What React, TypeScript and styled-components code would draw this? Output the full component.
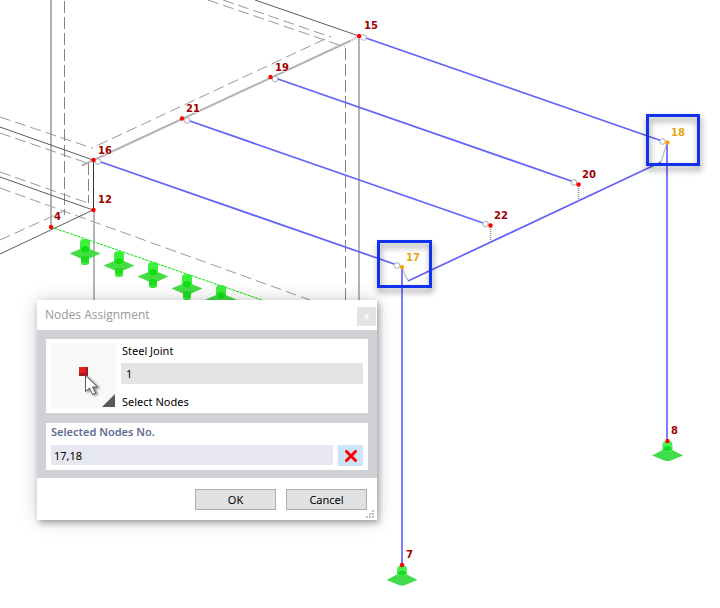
import React, { useState } from 'react';
import styled, { createGlobalStyle } from 'styled-components';

const GlobalStyle = createGlobalStyle`
  * { box-sizing: border-box; }
  body {
    margin: 0;
    background: #fff;
    font-family: 'Noto Sans', 'Open Sans', sans-serif;
    font-size: 11px;
    line-height: 16px;
    color: #000;
  }
`;

type Point = [number, number];
type Segment = [number, number, number, number];

const solidEdges: Segment[] = [
  [255, 0, 359, 36],
  [0, 127, 93, 160],
  [0, 177, 93, 210],
  [0, 254, 93, 210],
];

const hiddenEdges: Segment[] = [
  [0, 117, 92, 148],
  [325, 39, 92, 148],
  [0, 133, 90, 164],
  [208, 0, 345, 47],
  [223, 0, 331, 37],
  [0, 172, 88, 203],
  [0, 188, 310, 300],
  [0, 240, 64, 211],
];

const hiddenPosts: Segment[] = [
  [64.5, 1, 64.5, 215],
  [345.5, 48, 345.5, 312],
  [88.5, 163, 88.5, 203],
];

const beams: Segment[] = [
  [363, 37, 662, 141],
  [275, 78, 574, 182],
  [187, 120, 486, 224],
  [98, 161, 397, 265],
  [408, 281, 661, 162],
];

const columns: Segment[] = [
  [402, 267, 402, 566],
  [667, 143, 667, 441],
];

const offsets: Segment[] = [
  [350, 41, 359, 36],
  [402, 268, 408, 281],
  [667, 143, 661, 162],
  [490.5, 227, 490.5, 242],
  [578.5, 186, 578.5, 201],
];

const hinges: Point[] = [
  [363.5, 37.5], [275, 79], [187, 120.5], [98, 161.5],
  [485.5, 224], [574, 182.5], [397, 265.5], [662.5, 141.5],
];

interface ModelNode { no: number; x: number; y: number; label: Point; selected?: boolean }

const nodes: ModelNode[] = [
  { no: 15, x: 359, y: 36, label: [364, 29] },
  { no: 19, x: 270.5, y: 77, label: [275, 71] },
  { no: 21, x: 182, y: 118.5, label: [186, 112] },
  { no: 16, x: 93.5, y: 160, label: [98, 154] },
  { no: 12, x: 93.5, y: 210, label: [98, 203] },
  { no: 4, x: 51, y: 227, label: [54, 220] },
  { no: 22, x: 490.5, y: 225.5, label: [494, 219] },
  { no: 20, x: 578.5, y: 184.5, label: [582, 178] },
  { no: 7, x: 402, y: 565, label: [406, 558] },
  { no: 8, x: 667.5, y: 441, label: [671, 434] },
  { no: 17, x: 402, y: 267, label: [406, 261], selected: true },
  { no: 18, x: 667.5, y: 142.5, label: [671, 136], selected: true },
];

const lineSupports: Point[] = [[85, 253], [119, 265], [153, 276], [187, 288], [221, 299]];

const Workspace = styled.main`
  position: relative;
  min-height: 100vh;
  overflow: hidden;
`;

const Drawing = styled.svg`
  display: block;
`;

const NodeLabel = styled.text<{ $selected?: boolean }>`
  font: bold 10px 'DejaVu Sans', sans-serif;
  fill: ${p => (p.$selected ? '#e6a514' : '#a00000')};
  stroke: #fff;
  stroke-width: 1px;
  paint-order: stroke;
`;

const Highlight = styled.rect`
  fill: none;
  stroke: #1032ee;
  stroke-width: 3px;
  filter: drop-shadow(1px 4px 3px rgba(0, 0, 0, 0.45));
`;

const Dialog = styled.section`
  position: absolute;
  left: 37px;
  top: 300px;
  width: 340px;
  background: #fff;
  box-shadow: 2px 3px 6px rgba(0, 0, 0, 0.3), 0 0 18px rgba(0, 0, 0, 0.18);
`;

const TitleBar = styled.header`
  display: flex;
  align-items: center;
  justify-content: space-between;
  height: 30px;
  padding: 0 1px 0 8px;
`;

const Title = styled.h1`
  margin: 0;
  font-family: 'Open Sans', sans-serif;
  font-size: 12px;
  font-weight: 400;
  color: #999;
`;

const CloseButton = styled.button`
  display: grid;
  place-items: center;
  width: 19px;
  height: 19px;
  margin-top: 3px;
  padding: 0;
  border: 0;
  background: #e4e4e4;
`;

const Body = styled.div`
  display: grid;
  gap: 10px;
  padding: 9px 9px 8px;
  background: #d1d0d6;
`;

const JointPanel = styled.div`
  display: flex;
  gap: 5px;
  padding: 4px 5px 5px;
  background: #fff;
`;

const PickButton = styled.button`
  width: 65px;
  height: 65px;
  padding: 0;
  border: 0;
  background: #f8f8f8;
`;

const JointFields = styled.div`
  flex: 1;
  display: flex;
  flex-direction: column;
`;

const FieldLabel = styled.label`
  height: 20px;
  padding-left: 1px;
`;

const PickLabel = styled.span`
  height: 24px;
  padding: 10px 0 0 1px;
`;

const JointInput = styled.input`
  width: 100%;
  height: 21px;
  padding: 0 5px;
  border: 0;
  background: #e4e4e4;
  color: #000;
  font: inherit;
`;

const SelectionPanel = styled.div`
  padding: 1px 5px 4px;
  background: #fff;
`;

const SelectionLabel = styled.label`
  display: block;
  height: 21px;
  font-weight: 600;
  color: #5f6c96;
`;

const SelectionRow = styled.div`
  display: flex;
  gap: 5px;
`;

const SelectionInput = styled.input`
  flex: 1;
  min-width: 0;
  height: 20px;
  padding: 0 3px;
  border: 0;
  background: #e7e7f1;
  color: #000;
  font: inherit;
`;

const ClearButton = styled.button`
  display: grid;
  place-items: center;
  width: 25px;
  height: 21px;
  padding: 0;
  border: 0;
  background: #cce4f7;
`;

const Footer = styled.footer`
  display: flex;
  justify-content: flex-end;
  gap: 10px;
  padding: 11px 10px 10px;
`;

const ActionButton = styled.button`
  width: 81px;
  height: 21px;
  padding: 0;
  border: 1px solid #adadad;
  background: #e1e1e1;
  color: #000;
  font: inherit;
`;

const ResizeGrip = styled.svg`
  position: absolute;
  right: 3px;
  bottom: 2px;
`;

function Lines({ items }: { items: Segment[] }) {
  return (
    <>
      {items.map(([x1, y1, x2, y2]) => (
        <line key={`${x1},${y1},${x2},${y2}`} x1={x1} y1={y1} x2={x2} y2={y2} />
      ))}
    </>
  );
}

function LineSupport({ at: [x, y] }: { at: Point }) {
  return (
    <g transform={`translate(${x} ${y})`}>
      <path d="M-4 1v9q0 2 4 2t4-2V1z" fill="#3ceb3c" />
      <path d="M-15.500 0.500L0-6L15.500 0.500L2 6.500H-2z" fill="#46dc46" />
      <path d="M-5-11q0-3 5-3t5 3v9q-5 4-10 0z" fill="#3cf03c" />
      <path d="M-4-5q4-4 8 0v3q-4 3-8 0z" fill="#14dc14" />
      <path d="M-4 4q4-2 8 0v4q-4 3-8 0z" fill="#1edc1e" />
    </g>
  );
}

function NodeSupport({ at: [x, y] }: { at: Point }) {
  return (
    <g transform={`translate(${x} ${y})`}>
      <path d="M-15.500 15L-4 9H4L15.500 15L2 20.500H-2z" fill="#41dc4b" />
      <path d="M-5 5Q-5 0 0 0t5 5v5q-5 3-10 0z" fill="#46f050" />
      <path d="M-4 7q4-3 8 0v2q-4 3-8 0z" fill="#14dc1e" />
    </g>
  );
}

function StructureModel() {
  return (
    <Drawing width="720" height="608" viewBox="0 0 720 608" role="img" aria-label="Structural model with numbered nodes">
      <g stroke="#999" fill="none" strokeDasharray="11 5">
        <Lines items={hiddenEdges} />
      </g>
      <g stroke="#858585" fill="none" strokeDasharray="12 4">
        <Lines items={hiddenPosts} />
      </g>
      <path d="M51 0V227" stroke="#999" strokeWidth="1.5" />
      <path d="M94 210V301M359 36V301" stroke="#b4b4b4" strokeWidth="2" />
      <path d="M82 165.500L350 41" stroke="#b4b4b4" strokeWidth="2" />
      <g stroke="#5c5c5c">
        <Lines items={solidEdges} />
      </g>
      <path d="M93.500 160V210" stroke="#333" />
      <path d="M51 227L262 300" stroke="#00e600" strokeDasharray="3 1" />
      {lineSupports.map(p => <LineSupport key={p[0]} at={p} />)}
      <g stroke="#6464fa" strokeWidth="1.750">
        <Lines items={beams} />
      </g>
      <g stroke="#7d7dff" strokeWidth="2">
        <Lines items={columns} />
      </g>
      <g stroke="#8c8c8c" strokeWidth="1.5" strokeDasharray="1 1">
        <Lines items={offsets} />
      </g>
      <NodeSupport at={[402, 565]} />
      <NodeSupport at={[667.5, 440.5]} />
      {hinges.map(([x, y]) => (
        <circle key={`${x},${y}`} cx={x} cy={y} r="2.800" fill="#fff" stroke="#aaa" />
      ))}
      {nodes.map(n => (
        <g key={n.no}>
          <circle cx={n.x} cy={n.y} r="2.200" fill={n.selected ? '#f5a010' : '#ff0000'} />
          <NodeLabel x={n.label[0]} y={n.label[1]} $selected={n.selected}>{n.no}</NodeLabel>
        </g>
      ))}
      <Highlight x="378.500" y="241.500" width="52" height="45" />
      <Highlight x="647.500" y="115.500" width="51" height="49" />
    </Drawing>
  );
}

function PickIcon() {
  return (
    <svg width="65" height="65" viewBox="0 0 65 65" aria-hidden="true">
      <defs>
        <filter id="cursorShadow" x="-50%" y="-50%" width="200%" height="200%">
          <feDropShadow dx="2" dy="1" stdDeviation="1" floodColor="#000" floodOpacity="0.5" />
        </filter>
      </defs>
      <path d="M28 24h9v9h-9z" fill="#9c1e28" />
      <path d="M28 24h7v6h-7z" fill="#e81e1e" />
      <path
        d="M34.500 32.500V48.500L38.500 45L41.500 51.500L44.500 50L41.500 44H46.500z"
        fill="#fff"
        stroke="#555"
        filter="url(#cursorShadow)"
      />
      <path d="M64 51V64H51z" fill="#585858" />
    </svg>
  );
}

function NodesAssignmentDialog() {
  const [selection, setSelection] = useState('17,18');
  return (
    <Dialog role="dialog" aria-labelledby="dialog-title">
      <TitleBar>
        <Title id="dialog-title">Nodes Assignment</Title>
        <CloseButton type="button" aria-label="Close">
          <svg width="5" height="5" viewBox="0 0 5 5" aria-hidden="true">
            <path d="M0.500 0L4.500 5M4.500 0L0.500 5" stroke="#fafafa" strokeWidth="1.500" />
          </svg>
        </CloseButton>
      </TitleBar>
      <Body>
        <JointPanel>
          <PickButton type="button" aria-labelledby="pick-label"><PickIcon /></PickButton>
          <JointFields>
            <FieldLabel htmlFor="joint">Steel Joint</FieldLabel>
            <JointInput id="joint" value="1" readOnly />
            <PickLabel id="pick-label">Select Nodes</PickLabel>
          </JointFields>
        </JointPanel>
        <SelectionPanel>
          <SelectionLabel htmlFor="selection">Selected Nodes No.</SelectionLabel>
          <SelectionRow>
            <SelectionInput id="selection" value={selection} onChange={e => setSelection(e.target.value)} />
            <ClearButton type="button" aria-label="Clear selection" onClick={() => setSelection('')}>
              <svg width="12" height="12" viewBox="0 0 12 12" aria-hidden="true">
                <path d="M1.500 1.500L10.500 10.500M10.500 1.500L1.500 10.500" stroke="#ff0000" strokeWidth="3" strokeLinecap="round" />
              </svg>
            </ClearButton>
          </SelectionRow>
        </SelectionPanel>
      </Body>
      <Footer>
        <ActionButton type="button">OK</ActionButton>
        <ActionButton type="button">Cancel</ActionButton>
      </Footer>
      <ResizeGrip width="8" height="8" viewBox="0 0 8 8" aria-hidden="true">
        <path d="M6 0h2v2H6zM3 3h2v2H3zM6 3h2v2H6zM0 6h2v2H0zM3 6h2v2H3zM6 6h2v2H6z" fill="#bebebe" />
      </ResizeGrip>
    </Dialog>
  );
}

export default function App() {
  return (
    <>
      <GlobalStyle />
      <Workspace>
        <StructureModel />
        <NodesAssignmentDialog />
      </Workspace>
    </>
  );
}
